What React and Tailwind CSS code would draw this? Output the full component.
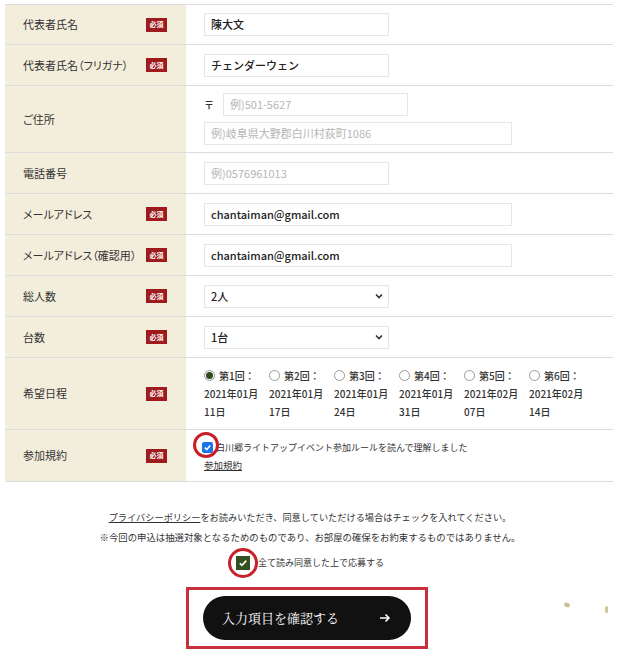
import React from "react";

const font = { fontFamily: '"Noto Sans CJK JP", "Noto Sans", sans-serif' };

const Badge = () => (
  <span className="flex h-[14px] w-[21px] items-center justify-center bg-[#9e1a1c] text-[7px] font-bold leading-none text-white">
    必須
  </span>
);

const Row = ({ label, required, h, children, top }) => (
  <div className={`flex border-b border-[#dcdcdc] ${top ? "border-t" : ""}`} style={{ height: h }}>
    <div className="flex w-[181px] shrink-0 items-center justify-between bg-[#f3eedc] pl-[18px] pr-[19px]">
      <span className="whitespace-nowrap text-[11px] text-[#333]" style={{ fontFeatureSettings: '"palt"' }}>
        {label}
      </span>
      {required && <Badge />}
    </div>
    <div className="flex flex-1 flex-col justify-center bg-white pl-[18px]">{children}</div>
  </div>
);

const Field = ({ value, placeholder, w = "w-[185px]" }) => (
  <div className={`flex h-[23px] ${w} items-center border border-[#e6e6e6] bg-white px-[6px] text-[11px]`}>
    {value ? (
      <span className="font-medium text-[#222]">{value}</span>
    ) : (
      <span className="text-[#b5b5b5]">{placeholder}</span>
    )}
  </div>
);

const Select = ({ value }) => (
  <div className="flex h-[23px] w-[185px] items-center justify-between border border-[#e6e6e6] bg-white pl-[6px] pr-[5px] text-[11px]">
    <span className="font-medium text-[#222]">{value}</span>
    <svg width="8" height="6" viewBox="0 0 8 6">
      <path d="M1 1.5 L4 4.5 L7 1.5" fill="none" stroke="#333" strokeWidth="1.6" />
    </svg>
  </div>
);

const dates = [
  ["第1回：", "2021年01月", "11日"],
  ["第2回：", "2021年01月", "17日"],
  ["第3回：", "2021年01月", "24日"],
  ["第4回：", "2021年01月", "31日"],
  ["第5回：", "2021年02月", "07日"],
  ["第6回：", "2021年02月", "14日"],
];

export default function App() {
  return (
    <div className="relative h-[662px] w-[620px] overflow-hidden bg-white" style={font}>
      <div className="ml-[5px] mt-[4px] w-[608px]">
        <Row label="代表者氏名" required h={41} top>
          <Field value="陳大文" />
        </Row>
        <Row label="代表者氏名（フリガナ）" required h={41}>
          <Field value="チェンダーウェン" />
        </Row>
        <Row label="ご住所" h={67}>
          <div className="flex items-center gap-[9px]">
            <span className="text-[10px] font-bold text-[#333]">〒</span>
            <Field placeholder="例)501-5627" />
          </div>
          <div className="mt-[6px]">
            <Field placeholder="例)岐阜県大野郡白川村荻町1086" w="w-[308px]" />
          </div>
        </Row>
        <Row label="電話番号" h={41}>
          <Field placeholder="例)0576961013" />
        </Row>
        <Row label="メールアドレス" required h={41}>
          <Field value="chantaiman@gmail.com" w="w-[308px]" />
        </Row>
        <Row label="メールアドレス（確認用）" required h={41}>
          <Field value="chantaiman@gmail.com" w="w-[308px]" />
        </Row>
        <Row label="総人数" required h={41}>
          <Select value="2人" />
        </Row>
        <Row label="台数" required h={41}>
          <Select value="1台" />
        </Row>
        <Row label="希望日程" required h={72}>
          <div className="flex">
            {dates.map((d, i) => (
              <div key={i} className="w-[65px] text-[10px] font-medium leading-[18px] text-[#333]">
                <div className="flex items-center gap-[4px]">
                  <span className="flex h-[11px] w-[11px] items-center justify-center rounded-full border border-[#999] bg-white">
                    {i === 0 && <span className="h-[7px] w-[7px] rounded-full bg-[#2f4a1c]" />}
                  </span>
                  <span>{d[0]}</span>
                </div>
                <div>{d[1]}</div>
                <div>{d[2]}</div>
              </div>
            ))}
          </div>
        </Row>
        <Row label="参加規約" required h={52}>
          <div className="relative -ml-[2px] mt-[2px] flex items-center gap-[3px] text-[9px] text-[#333]">
            <span className="flex h-[11px] w-[11px] items-center justify-center rounded-[2px] bg-[#1a73e8]">
              <svg width="9" height="9" viewBox="0 0 10 10">
                <path d="M2 5.2 L4.2 7.4 L8 2.8" fill="none" stroke="white" strokeWidth="1.8" />
              </svg>
            </span>
            <span>白川郷ライトアップイベント参加ルールを読んで理解しました</span>
            <span className="absolute left-[-9px] top-[-9px] h-[26px] w-[26px] rounded-full border-[3px] border-[#c8202a]" />
          </div>
          <span className="mt-[4px] text-[9.5px] text-[#333] underline">参加規約</span>
        </Row>
      </div>

      <div className="mt-[25px] flex flex-col items-center text-[9.2px] text-[#333]">
        <p className="leading-[20px]">
          <span className="underline">プライバシーポリシー</span>
          をお読みいただき、同意していただける場合はチェックを入れてください。
        </p>
        <p className="text-[9.4px] leading-[20px]">
          ※今回の申込は抽選対象となるためのものであり、お部屋の確保をお約束するものではありません。
        </p>
        <div className="relative mt-[9px] flex items-center gap-[8px] text-[9px]">
          <span className="flex h-[14px] w-[14px] items-center justify-center bg-[#33521f]">
            <svg width="10" height="10" viewBox="0 0 10 10">
              <path d="M1.8 5.2 L4 7.4 L8.3 2.6" fill="none" stroke="white" strokeWidth="1.6" />
            </svg>
          </span>
          <span>全て読み同意した上で応募する</span>
          <span className="absolute left-[-8px] top-[-8px] h-[30px] w-[30px] rounded-full border-[3px] border-[#c8202a]" />
        </div>
        <div className="-ml-[6px] mt-[17px] border-[3px] border-[#c8303c] px-[14px] py-[6px]">
          <div className="flex h-[44px] w-[208px] items-center justify-between rounded-full bg-[#111] pl-[19px] pr-[20px] text-white">
            <span
              className="text-[13px]"
              style={{ fontFamily: '"Noto Serif CJK JP", "Liberation Serif", serif' }}
            >
              入力項目を確認する
            </span>
            <svg width="12" height="12" viewBox="0 0 12 12">
              <path d="M1 6 H10 M6.5 2.5 L10 6 L6.5 9.5" fill="none" stroke="white" strokeWidth="1.6" />
            </svg>
          </div>
        </div>
      </div>

      <span className="absolute left-[564px] top-[603px] h-[4px] w-[6px] rotate-[20deg] rounded-full bg-[#cbbf8f]" />
      <span className="absolute left-[605px] top-[606px] h-[7px] w-[3px] rounded-full bg-[#d2c692]" />
    </div>
  );
}
